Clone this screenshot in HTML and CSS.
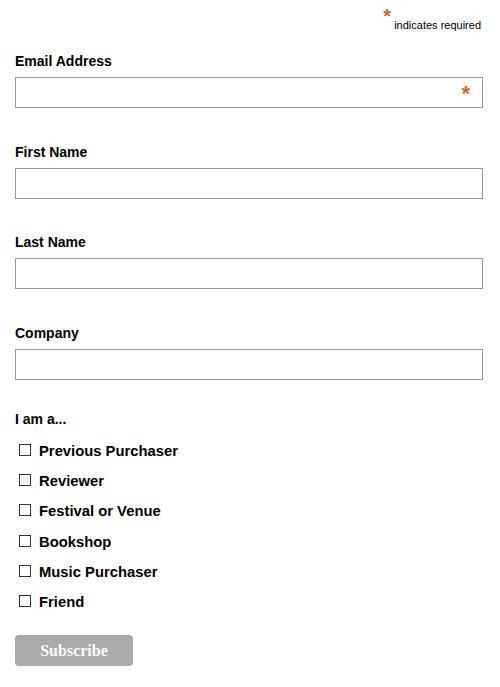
FILE: index.html
```html
<!DOCTYPE html>
<html>
<head>
<meta charset="utf-8">
<link rel="stylesheet" href="styles.css">
</head>
<body>
<form class="signup">
  <div class="required-note"><span class="asterisk">*</span> indicates required</div>
  <div class="group">
    <label class="field-label">Email Address</label>
    <div class="input-wrap">
      <input class="text-input" type="email">
      <span class="input-asterisk">*</span>
    </div>
  </div>
  <div class="group tight">
    <label class="field-label">First Name</label>
    <input class="text-input" type="text">
  </div>
  <div class="group">
    <label class="field-label">Last Name</label>
    <input class="text-input" type="text">
  </div>
  <div class="group last">
    <label class="field-label">Company</label>
    <input class="text-input" type="text">
  </div>
  <div class="checks">
    <div class="field-label">I am a...</div>
    <ul class="check-list">
      <li class="check-row"><input class="box" type="checkbox"><label>Previous Purchaser</label></li>
      <li class="check-row"><input class="box" type="checkbox"><label>Reviewer</label></li>
      <li class="check-row"><input class="box" type="checkbox"><label>Festival or Venue</label></li>
      <li class="check-row tall"><input class="box" type="checkbox"><label>Bookshop</label></li>
      <li class="check-row"><input class="box" type="checkbox"><label>Music Purchaser</label></li>
      <li class="check-row"><input class="box" type="checkbox"><label>Friend</label></li>
    </ul>
  </div>
  <button class="subscribe" type="button">Subscribe</button>
</form>
</body>
</html>
```
FILE: styles.css
```css
html, body {
  margin: 0;
  padding: 0;
  background: #fff;
}
body {
  font-family: "Liberation Sans", Arial, sans-serif;
  color: #000;
}
.signup {
  display: flex;
  flex-direction: column;
  padding: 11px 17px 0 15px;
}
.required-note {
  align-self: flex-end;
  font-size: 11px;
  line-height: 22px;
  height: 22px;
  margin-right: 2px;
  margin-bottom: 20px;
  color: #000;
}
.asterisk {
  color: #d2691e;
  font-size: 20px;
  font-weight: bold;
  position: relative;
  top: -6px;
}
.group {
  display: flex;
  flex-direction: column;
  margin-bottom: 36px;
}
.group.tight {
  margin-bottom: 35px;
}
.group.last {
  margin-bottom: 31px;
}
.field-label {
  display: block;
  font-size: 14px;
  font-weight: bold;
  line-height: 16px;
  height: 16px;
  margin-bottom: 8px;
}
.input-wrap {
  position: relative;
}
.text-input {
  display: block;
  box-sizing: border-box;
  width: 100%;
  height: 31px;
  margin: 0;
  border: 1px solid #999;
  border-radius: 0;
  padding: 0 8px;
  font-family: "Liberation Sans", Arial, sans-serif;
  font-size: 14px;
  background: #fff;
  outline: none;
}
.input-asterisk {
  position: absolute;
  right: 13px;
  top: 6px;
  color: #d2691e;
  font-size: 22px;
  line-height: 22px;
  font-weight: bold;
}
.checks {
  display: flex;
  flex-direction: column;
}
.check-list {
  list-style: none;
  margin: 0;
  padding: 1px 0 0;
  display: flex;
  flex-direction: column;
}
.check-row {
  display: flex;
  align-items: center;
  height: 30px;
  font-size: 14.8px;
  font-weight: bold;
}
.check-row.tall {
  height: 31px;
  padding-top: 1px;
  box-sizing: border-box;
}
.box {
  appearance: none;
  -webkit-appearance: none;
  box-sizing: border-box;
  width: 12px;
  height: 12px;
  margin: 0 8px 0 4px;
  border: 1px solid #333;
  border-radius: 0;
  background: #fff;
  position: relative;
  top: -1px;
}
.subscribe {
  align-self: flex-start;
  margin-top: 18px;
  width: 118px;
  height: 31px;
  border: none;
  border-radius: 4px;
  background: #aaa;
  color: #fff;
  font-family: "Liberation Serif", "Times New Roman", serif;
  font-size: 16px;
  font-weight: bold;
  padding: 0;
}
```
